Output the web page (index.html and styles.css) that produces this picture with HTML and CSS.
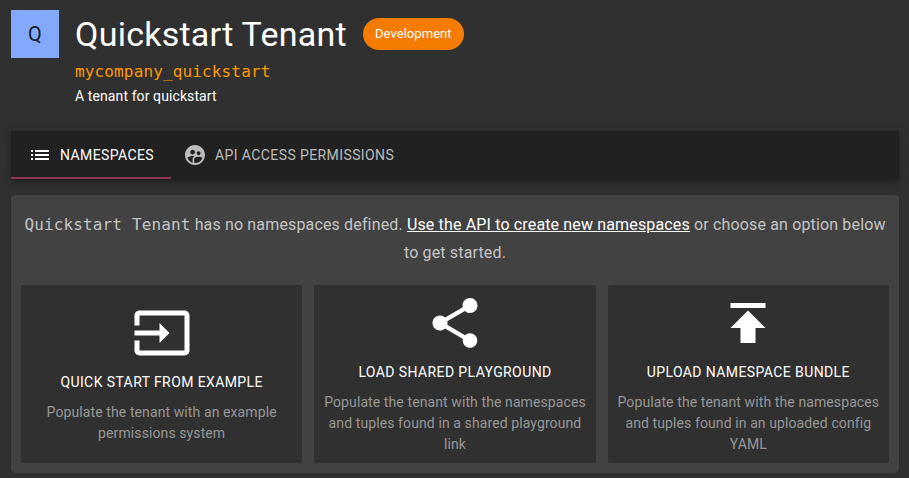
FILE: index.html
```html
<!DOCTYPE html>
<html lang="en">
<head>
<meta charset="utf-8">
<title>Quickstart Tenant</title>
<link rel="stylesheet" href="styles.css">
</head>
<body>
<header class="tenant">
  <div class="avatar">Q</div>
  <div class="details">
    <div class="heading"><h1>Quickstart Tenant</h1><span class="chip">Development</span></div>
    <div class="slug">mycompany_quickstart</div>
    <p class="summary">A tenant for quickstart</p>
  </div>
</header>
<nav class="tabs">
  <a class="tab active">
    <svg viewBox="0 0 24 24"><path d="M3 13h2v-2H3v2zm0 4h2v-2H3v2zm0-8h2V7H3v2zm4 4h14v-2H7v2zm0 4h14v-2H7v2zM7 7v2h14V7H7z"/></svg>
    <span>NAMESPACES</span>
  </a>
  <a class="tab">
    <svg viewBox="0 0 24 24"><path d="M11.99 2c-5.52 0-10 4.48-10 10s4.48 10 10 10 10-4.48 10-10-4.48-10-10-10zm3.61 6.34c1.07 0 1.93.86 1.93 1.93 0 1.07-.86 1.93-1.93 1.93-1.07 0-1.93-.86-1.93-1.93-.01-1.07.86-1.93 1.93-1.93zm-6-1.58c1.3 0 2.36 1.06 2.36 2.36 0 1.3-1.06 2.36-2.36 2.36s-2.36-1.06-2.36-2.36c0-1.31 1.05-2.36 2.36-2.36zm0 9.13v3.75c-2.4-.75-4.3-2.6-5.14-4.96 1.05-1.12 3.67-1.69 5.14-1.69.53 0 1.2.08 1.9.22-1.64.87-1.9 2.02-1.9 2.68zM11.99 20c-.27 0-.53-.01-.79-.04v-4.07c0-1.42 2.94-2.13 4.4-2.13 1.07 0 2.92.39 3.84 1.15-1.17 2.97-4.06 5.09-7.45 5.09z"/></svg>
    <span>API ACCESS PERMISSIONS</span>
  </a>
</nav>
<main class="panel">
  <p class="intro"><code>Quickstart Tenant</code> has no namespaces defined. <a>Use the API to create new namespaces</a> or choose an option below to get started.</p>
  <div class="options">
    <section class="card">
      <svg viewBox="0 0 24 24"><path d="M21 3.01H3c-1.1 0-2 .9-2 2V9h2V4.99h18v14.03H3V15H1v4.01c0 1.1.9 1.98 2 1.98h18c1.1 0 2-.88 2-1.98v-14c0-1.11-.9-2-2-2zM11 16l4-4-4-4v3H1v2h10v3z"/></svg>
      <h2>QUICK START FROM EXAMPLE</h2>
      <p>Populate the tenant with an example permissions system</p>
    </section>
    <section class="card">
      <svg viewBox="0 0 24 24"><path d="M18 16.08c-.76 0-1.44.3-1.96.77L8.91 12.7c.05-.23.09-.46.09-.7s-.04-.47-.09-.7l7.05-4.11c.54.5 1.25.81 2.04.81 1.66 0 3-1.34 3-3s-1.34-3-3-3-3 1.34-3 3c0 .24.04.47.09.7L8.04 9.81C7.5 9.31 6.79 9 6 9c-1.66 0-3 1.34-3 3s1.34 3 3 3c.79 0 1.5-.31 2.04-.81l7.12 4.16c-.05.21-.08.43-.08.65 0 1.61 1.31 2.92 2.92 2.92s2.92-1.31 2.92-2.92-1.31-2.92-2.92-2.92z"/></svg>
      <h2>LOAD SHARED PLAYGROUND</h2>
      <p>Populate the tenant with the namespaces and tuples found in a shared playground link</p>
    </section>
    <section class="card">
      <svg viewBox="0 0 24 24"><path d="M5 4v2h14V4H5zm0 10h4v6h6v-6h4l-7-7-7 7z"/></svg>
      <h2>UPLOAD NAMESPACE BUNDLE</h2>
      <p>Populate the tenant with the namespaces and tuples found in an uploaded config YAML</p>
    </section>
  </div>
</main>
</body>
</html>
```
FILE: styles.css
```css
* { box-sizing: border-box; }
html { overflow: hidden; }
body {
  margin: 0;
  padding: 10px 10px 0 11px;
  background: #303030;
  color: #fff;
  font-family: Roboto, "Liberation Sans", sans-serif;
  -webkit-font-smoothing: antialiased;
}
h1, h2, p { margin: 0; font-weight: 400; }
svg { display: block; fill: currentColor; flex: none; }

.tenant { display: flex; gap: 16px; height: 121px; }
.avatar {
  width: 48px;
  height: 48px;
  background: #82a9fb;
  color: rgba(0, 0, 0, 0.87);
  font-size: 20px;
  line-height: 48px;
  text-align: center;
}
.heading { display: flex; align-items: center; gap: 16px; height: 48px; }
h1 { font-size: 34px; line-height: 42px; letter-spacing: 0.25px; }
.chip {
  height: 32px;
  padding: 0 12px;
  border-radius: 16px;
  background: #f57c00;
  font-size: 13px;
  line-height: 32px;
  letter-spacing: 0.06px;
}
.slug, code { font-family: "DejaVu Sans Mono", monospace; font-size: 16px; letter-spacing: 0.14px; }
.slug { color: #ff9800; line-height: 28px; }
code { line-height: 1; }
.summary { font-size: 14px; line-height: 20px; letter-spacing: 0.1px; }

.tabs {
  display: flex;
  height: 48px;
  background: #212121;
  box-shadow: 0 2px 4px -1px rgba(0,0,0,.2), 0 4px 5px rgba(0,0,0,.14), 0 1px 10px rgba(0,0,0,.12);
}
.tab {
  display: flex;
  align-items: center;
  gap: 8px;
  padding: 0 12px;
  font-size: 14px;
  letter-spacing: 0.4px;
  color: rgba(255, 255, 255, 0.7);
}
.tab.active { width: 160px; padding-left: 17px; color: #fff; box-shadow: inset 0 -2px #8e3650; }

.panel {
  height: 278px;
  margin-top: 16px;
  padding: 16px 10px 10px;
  border-radius: 4px;
  background: #424242;
  box-shadow: 0 2px 1px -1px rgba(0,0,0,.2), 0 1px 1px rgba(0,0,0,.14), 0 1px 3px rgba(0,0,0,.12);
}
.intro {
  height: 74px;
  font-size: 16px;
  line-height: 28px;
  letter-spacing: 0.15px;
  color: rgba(255, 255, 255, 0.7);
  text-align: center;
}
.intro a { color: #fff; text-decoration: underline; }
.options { display: grid; grid-template-columns: repeat(3, 1fr); gap: 12px; height: 178px; }
.card {
  display: flex;
  flex-direction: column;
  align-items: center;
  justify-content: center;
  padding: 8px;
  border-radius: 2px;
  background: #303030;
  text-align: center;
}
.card:first-child { padding-bottom: 9px; }
.tab svg { width: 24px; height: 24px; }
.card svg { width: 60px; height: 60px; }
.card h2 { font-size: 14px; line-height: 39px; letter-spacing: 0.4px; }
.card p { font-size: 14px; line-height: 21px; letter-spacing: 0.1px; color: #979797; }
```
